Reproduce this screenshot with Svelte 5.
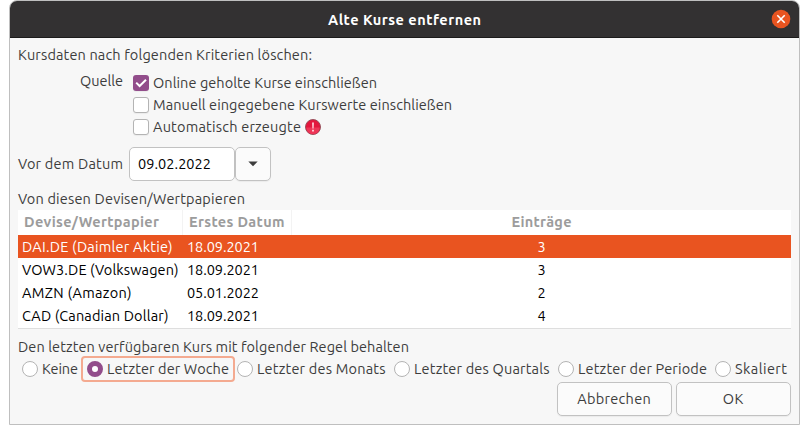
<script>
  const sources = [
    { label: 'Online geholte Kurse einschließen', width: 224, checked: true },
    { label: 'Manuell eingegebene Kurswerte einschließen', width: 299 },
    { label: 'Automatisch erzeugte', width: 148, warn: true }
  ];
  const rows = [
    { name: 'DAI.DE (Daimler Aktie)', width: 150.5, date: '18.09.2021', count: 3 },
    { name: 'VOW3.DE (Volkswagen)', width: 156.5, date: '18.09.2021', count: 3 },
    { name: 'AMZN (Amazon)', width: 109.5, date: '05.01.2022', count: 2 },
    { name: 'CAD (Canadian Dollar)', width: 146.5, date: '18.09.2021', count: 4 }
  ];
  const rules = [
    { label: 'Keine', width: 36, cell: 65 },
    { label: 'Letzter der Woche', width: 122, cell: 150 },
    { label: 'Letzter des Monats', width: 128.5, cell: 157 },
    { label: 'Letzter des Quartals', width: 135.5, cell: 164 },
    { label: 'Letzter der Periode', width: 129, cell: 157 },
    { label: 'Skaliert', width: 52, cell: 72 }
  ];
  const selectedRule = 1;

  // Tracks a label so that it fills the given width.
  function fit(node, width) {
    const natural = node.getBoundingClientRect().width;
    const gaps = node.textContent.length - 1;
    node.style.letterSpacing = (width - natural) / gaps + 'px';
    node.style.width = width + 'px';
  }
</script>

<div class="window">
  <header>
    <span class="t" use:fit={153}>Alte Kurse entfernen</span>
    <button class="close" aria-label="Schließen">
      <svg width="20" height="20" viewBox="0 0 20 20">
        <circle cx="10" cy="10" r="9.3" fill="#e95420" />
        <path d="M6.3 6.3L13.7 13.7M13.7 6.3L6.3 13.7" stroke="#fff" stroke-width="1.6" />
      </svg>
    </button>
  </header>

  <main>
    <div class="line"><span class="t" use:fit={294}>Kursdaten nach folgenden Kriterien löschen:</span></div>

    <section class="source">
      <div class="caption"><span class="t" use:fit={43}>Quelle</span></div>
      <div class="checks">
        {#each sources as s}
          <div class="check">
            <span class="box" class:checked={s.checked}>
              {#if s.checked}
                <svg width="16" height="16" viewBox="0 0 16 16"><path d="M3.2 7.6L6.6 11L13 4.7" fill="none" stroke="#fff" stroke-width="2" /></svg>
              {/if}
            </span>
            <span class="t" use:fit={s.width}>{s.label}</span>
            {#if s.warn}
              <svg width="16" height="16" viewBox="0 0 16 16">
                <circle cx="8" cy="8" r="7.5" fill="#e3173e" stroke="#8f4a55" stroke-width=".9" />
                <path d="M1.3 8.5A6.7 6.7 0 0 0 14.7 8.5Z" fill="#ee3657" />
                <path d="M7.1 3.5h1.8l-.3 6.1H7.4zM7.1 10.8h1.8v1.7H7.1z" fill="#ffd9e0" />
              </svg>
            {/if}
          </div>
        {/each}
      </div>
    </section>

    <section class="date">
      <span class="t" use:fit={105}>Vor dem Datum</span>
      <div class="entry"><span class="t" use:fit={73}>09.02.2022</span></div>
      <button class="drop" aria-label="Kalender">
        <svg width="10" height="6" viewBox="0 0 10 6"><path d="M.3 .5H9.7L5 5.3Z" fill="#3d3d3d" /></svg>
      </button>
    </section>

    <div class="line"><span class="t" use:fit={227}>Von diesen Devisen/Wertpapieren</span></div>
    <div class="table">
      <div class="row head">
        <div class="name"><span class="t" use:fit={135}>Devise/Wertpapier</span></div>
        <div class="when"><span class="t" use:fit={95.5}>Erstes Datum</span></div>
        <div class="count"><span class="t" use:fit={60}>Einträge</span></div>
      </div>
      {#each rows as r, i}
        <div class="row" class:selected={i === 0}>
          <div class="name"><span class="t" use:fit={r.width}>{r.name}</span></div>
          <div class="when"><span class="t" use:fit={72}>{r.date}</span></div>
          <div class="count">{r.count}</div>
        </div>
      {/each}
    </div>

    <div class="line keep"><span class="t" use:fit={391}>Den letzten verfügbaren Kurs mit folgender Regel behalten</span></div>
    <div class="rules">
      {#each rules as r, i}
        <div class="rule" class:focus={i === selectedRule} style:width="{r.cell}px">
          <span class="radio" class:on={i === selectedRule}></span>
          <span class="t" use:fit={r.width}>{r.label}</span>
        </div>
      {/each}
    </div>

    <footer>
      <button><span class="t" use:fit={73.5}>Abbrechen</span></button>
      <button><span class="t" use:fit={20.5}>OK</span></button>
    </footer>
  </main>
</div>

<style>
  :global(body) {
    background: #fff;
  }
  .window {
    box-sizing: border-box;
    width: 791px;
    height: 425px;
    margin-left: 9px;
    border: 1px solid #bfbfbf;
    border-radius: 8px 8px 0 0;
    background: #f7f7f7;
    overflow: hidden;
    color: #3d3d3d;
    font: 14.5px/22px Ubuntu, 'Noto Sans', sans-serif;
  }
  .t {
    display: inline-block;
    flex: none;
    white-space: nowrap;
  }
  header {
    box-sizing: border-box;
    position: relative;
    height: 37px;
    display: flex;
    align-items: center;
    justify-content: center;
    padding-top: 1px;
    background: #333132;
    border-bottom: 1px solid #1c1b1b;
    color: #fff;
    font-weight: 700;
  }
  button {
    box-sizing: border-box;
    margin: 0;
    padding: 0;
    font: inherit;
    color: inherit;
    display: flex;
    align-items: center;
    justify-content: center;
  }
  .close {
    position: absolute;
    right: 8px;
    top: 8px;
    border: 0;
    background: none;
  }
  main {
    padding: 6px 8px 0;
  }
  .line {
    height: 22px;
  }
  .source {
    display: flex;
    height: 75px;
    padding-top: 6px;
    box-sizing: border-box;
  }
  .caption {
    width: 115px;
    box-sizing: border-box;
    padding-left: 62px;
    margin-top: -2px;
  }
  .check {
    display: flex;
    align-items: center;
    gap: 4px;
    height: 22px;
  }
  .box {
    box-sizing: border-box;
    width: 16px;
    height: 16px;
    border: 1px solid #b4b4b4;
    border-radius: 3px;
    background: #fff;
    box-shadow: 0 1px 1px #0000000d;
  }
  .box.checked {
    border: 0;
    background: #924d8b;
  }
  .box svg {
    display: block;
  }
  .date {
    display: flex;
    align-items: center;
    height: 34px;
    margin: 6px 0 7px;
  }
  .entry {
    box-sizing: border-box;
    width: 106px;
    height: 34px;
    margin-left: 6px;
    padding: 5px 8px;
    border: 1px solid #c2c2c2;
    border-radius: 5px;
    background: #fff;
    color: #000;
  }
  .drop {
    width: 36px;
    height: 34px;
    border: 1px solid #c2c2c2;
    border-radius: 5px;
    background: #fbfbfb;
    box-shadow: 0 1px 1px #0000000d;
  }
  .table {
    box-sizing: border-box;
    height: 119px;
    background: #fff;
    border-bottom: 1px solid #dedede;
    color: #000;
  }
  .row {
    display: flex;
    height: 23px;
    line-height: 24px;
  }
  .head {
    height: 25px;
    font-weight: 700;
    color: #9c9c9c;
  }
  .selected {
    background: #e95420;
    color: #fff;
  }
  .name,
  .when {
    box-sizing: border-box;
    width: 165px;
    padding-left: 4px;
  }
  .when {
    width: 109px;
  }
  .head .name,
  .head .when {
    padding-left: 6px;
    border-right: 1px solid #f3f3f3;
  }
  .count {
    flex: 1;
    text-align: center;
  }
  .keep {
    margin-top: 7px;
  }
  .rules {
    display: flex;
    height: 24px;
    padding-left: 4px;
  }
  .rule {
    position: relative;
    display: flex;
    align-items: center;
    gap: 4px;
    height: 22px;
    flex: none;
  }
  .focus::before {
    content: '';
    position: absolute;
    box-sizing: border-box;
    left: -6px;
    top: -2px;
    width: 154px;
    height: 26px;
    border: 2px solid #f4aa90;
    border-radius: 4px;
  }
  .radio {
    box-sizing: border-box;
    width: 16px;
    height: 16px;
    border: 1px solid #b4b4b4;
    border-radius: 50%;
    background: #fff;
    flex: none;
  }
  .radio.on {
    border: 5px solid #924d8b;
  }
  footer {
    display: flex;
    justify-content: flex-end;
    gap: 4px;
  }
  footer button {
    width: 115px;
    height: 34px;
    padding-right: 1px;
    border: 1px solid #c2c2c2;
    border-radius: 5px;
    background: #fbfbfb;
    box-shadow: 0 1px 1px #0000000d;
  }
</style>
